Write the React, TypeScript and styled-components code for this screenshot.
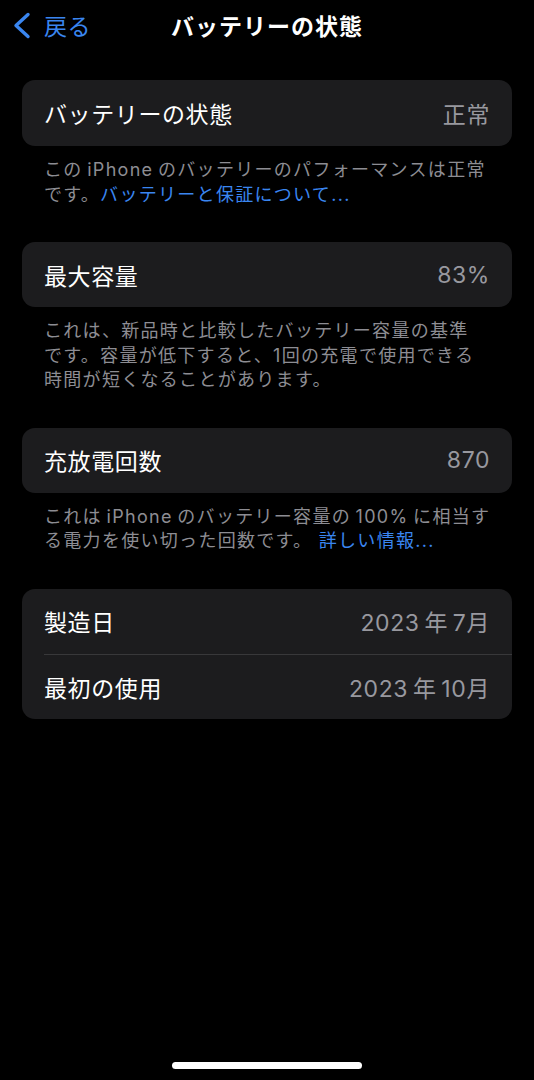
import React from "react";
import styled, { createGlobalStyle } from "styled-components";

const GlobalStyle = createGlobalStyle`
  html, body {
    margin: 0;
    padding: 0;
    background: #000;
  }
  body {
    font-family: Inter, "Noto Sans CJK JP", sans-serif;
    color: #fff;
    -webkit-font-smoothing: antialiased;
  }
`;

const Page = styled.div`
  width: 534px;
  height: 1080px;
  display: flex;
  flex-direction: column;
  background: #000;
  overflow: hidden;
`;

const NavBar = styled.header`
  height: 50px;
  display: grid;
  grid-template-columns: 1fr auto 1fr;
  align-items: center;
`;

const BackButton = styled.button`
  justify-self: start;
  display: flex;
  align-items: center;
  gap: 13px;
  padding: 0 0 0 12px;
  border: none;
  background: none;
  color: #3a86f0;
  font-family: inherit;
  font-size: 23px;
  letter-spacing: 0.5px;
  cursor: pointer;
`;

const Title = styled.h1`
  margin: 0;
  font-size: 23px;
  font-weight: 700;
  letter-spacing: 1px;
  color: #fff;
`;

const Content = styled.main`
  padding: 30px 22px 0;
  display: flex;
  flex-direction: column;
`;

const Section = styled.section`
  display: flex;
  flex-direction: column;
  margin-bottom: 35px;
`;

const Card = styled.div`
  background: #1c1c1e;
  border-radius: 13px;
  overflow: hidden;
`;

const Row = styled.div<{ $tall?: boolean }>`
  height: ${(p) => (p.$tall ? 66 : 65)}px;
  margin-left: 22px;
  padding-right: 22px;
  display: flex;
  align-items: center;
  justify-content: space-between;
  font-size: 23px;
  letter-spacing: 0.6px;

  & + & {
    border-top: 1px solid #38383a;
    height: 64px;
  }
`;

const Label = styled.span`
  color: #fff;
`;

const Value = styled.span`
  color: #98989f;
`;

const Footnote = styled.p`
  margin: 0;
  padding: 12px 22px 0;
  font-size: 18px;
  line-height: 24.5px;
  letter-spacing: 1.3px;
  color: #8d8d93;
  white-space: nowrap;
`;

const Link = styled.a`
  color: #3a86f0;
  text-decoration: none;
`;

const HomeIndicator = styled.div`
  margin: auto auto 11px;
  width: 190px;
  height: 7px;
  border-radius: 4px;
  background: #fff;
`;

const Chevron = () => (
  <svg width="19" height="27" viewBox="0 0 19 27" fill="none">
    <path
      d="M16 2.5 L4 13.5 L16 24.5"
      stroke="currentColor"
      strokeWidth="3.4"
      strokeLinecap="round"
      strokeLinejoin="round"
    />
  </svg>
);

export default function App() {
  return (
    <>
      <GlobalStyle />
      <Page>
        <NavBar>
          <BackButton>
            <Chevron />
            戻る
          </BackButton>
          <Title>バッテリーの状態</Title>
          <span />
        </NavBar>

        <Content>
          <Section>
            <Card>
              <Row $tall>
                <Label>バッテリーの状態</Label>
                <Value>正常</Value>
              </Row>
            </Card>
            <Footnote>
              この{"\u2009"}iPhone{"\u2009"}のバッテリーのパフォーマンスは正常
              <br />
              です。<Link>バッテリーと保証について...</Link>
            </Footnote>
          </Section>

          <Section>
            <Card>
              <Row>
                <Label>最大容量</Label>
                <Value>83%</Value>
              </Row>
            </Card>
            <Footnote>
              これは、新品時と比較したバッテリー容量の基準
              <br />
              です。容量が低下すると、1回の充電で使用できる
              <br />
              時間が短くなることがあります。
            </Footnote>
          </Section>

          <Section>
            <Card>
              <Row>
                <Label>充放電回数</Label>
                <Value>870</Value>
              </Row>
            </Card>
            <Footnote>
              これは{"\u2009"}iPhone{"\u2009"}のバッテリー容量の{"\u2009"}100%
              {"\u2009"}に相当す
              <br />
              る電力を使い切った回数です。 <Link>詳しい情報...</Link>
            </Footnote>
          </Section>

          <Section>
            <Card>
              <Row>
                <Label>製造日</Label>
                <Value>2023{"\u2009"}年{"\u2009"}7月</Value>
              </Row>
              <Row>
                <Label>最初の使用</Label>
                <Value>2023{"\u2009"}年{"\u2009"}10月</Value>
              </Row>
            </Card>
          </Section>
        </Content>

        <HomeIndicator />
      </Page>
    </>
  );
}
